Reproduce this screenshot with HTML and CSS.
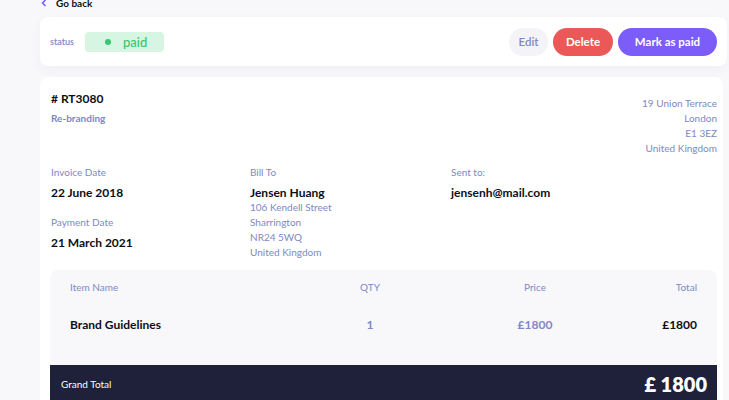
FILE: index.html
```html
<!DOCTYPE html>
<html lang="en">
<head>
<meta charset="utf-8">
<title>Invoice RT3080</title>
<link rel="stylesheet" href="styles.css">
</head>
<body>
<div class="page">
  <a class="back" href="#">
    <svg class="chev" width="6" height="8" viewBox="0 0 6 8"><path d="M4.5 1 L1.5 4 L4.5 7" fill="none" stroke="#7c5dfa" stroke-width="1.6"/></svg>
    <span>Go back</span>
  </a>

  <div class="status-card">
    <div class="status-left">
      <span class="status-label">status</span>
      <span class="badge"><span class="dot"></span>paid</span>
    </div>
    <div class="actions">
      <button class="btn btn-edit">Edit</button>
      <button class="btn btn-delete">Delete</button>
      <button class="btn btn-paid">Mark as paid</button>
    </div>
  </div>

  <div class="invoice-card">
    <div class="top">
      <div class="ident">
        <div class="inv-id"># RT3080</div>
        <div class="inv-desc">Re-branding</div>
      </div>
      <div class="sender">
        <div>19 Union Terrace</div>
        <div>London</div>
        <div>E1 3EZ</div>
        <div>United Kingdom</div>
      </div>
    </div>

    <div class="details">
      <div class="col">
        <div class="label">Invoice Date</div>
        <div class="value">22 June 2018</div>
        <div class="label label-gap">Payment Date</div>
        <div class="value">21 March 2021</div>
      </div>
      <div class="col">
        <div class="label">Bill To</div>
        <div class="value">Jensen Huang</div>
        <div class="addr">106 Kendell Street</div>
        <div class="addr">Sharrington</div>
        <div class="addr">NR24 5WQ</div>
        <div class="addr">United Kingdom</div>
      </div>
      <div class="col">
        <div class="label">Sent to:</div>
        <div class="value">jensenh@mail.com</div>
      </div>
    </div>

    <div class="items">
      <div class="row head">
        <div>Item Name</div>
        <div class="c">QTY</div>
        <div class="c">Price</div>
        <div class="r">Total</div>
      </div>
      <div class="row item">
        <div class="name">Brand Guidelines</div>
        <div class="c muted">1</div>
        <div class="c muted">£1800</div>
        <div class="r">£1800</div>
      </div>
    </div>
    <div class="grand">
      <span class="grand-label">Grand Total</span>
      <span class="grand-amount">£ 1800</span>
    </div>
  </div>
</div>
</body>
</html>
```

FILE: styles.css
```css
* { box-sizing: border-box; }
html, body { margin: 0; padding: 0; }
body {
  background: #f8f8fb;
  font-family: "Lato", "Inter", sans-serif;
  color: #0c0e16;
  overflow: hidden;
}
.page {
  padding: 0 2px 0 40px;
}
.back {
  display: flex;
  align-items: center;
  gap: 9px;
  height: 10px;
  margin-top: -2px;
  padding-left: 1px;
  text-decoration: none;
  color: #0c0e16;
  font-size: 10px;
  font-weight: 700;
}
.chev { display: block; }
.status-card {
  margin-top: 9px;
  height: 49px;
  background: #fff;
  border-radius: 8px;
  box-shadow: 0 4px 10px rgba(72, 84, 159, 0.05);
  display: flex;
  align-items: center;
  justify-content: space-between;
  padding: 0 10px 0 10px;
}
.status-left {
  display: flex;
  align-items: center;
  gap: 11px;
}
.status-label {
  font-size: 9px;
  color: #7e88c3;
  font-weight: 600;
}
.badge {
  width: 79px;
  height: 20px;
  border-radius: 4px;
  background: #d6f5e2;
  color: #33c96c;
  font-size: 13px;
  font-weight: 500;
  display: flex;
  align-items: center;
  padding-left: 20px;
  gap: 12px;
}
.dot {
  width: 6px;
  height: 6px;
  border-radius: 50%;
  background: #33c96c;
}
.actions {
  display: flex;
  gap: 5px;
}
.btn {
  height: 28px;
  border: none;
  border-radius: 14px;
  font-family: inherit;
  font-size: 11.5px;
  font-weight: 700;
  padding: 0;
  cursor: pointer;
}
.btn-edit { width: 39px; background: #f3f3f8; color: #7e88c3; font-weight: 600; }
.btn-delete { width: 60px; background: #ec5757; color: #fff; }
.btn-paid { width: 99px; background: #7c5dfa; color: #fff; }

.invoice-card {
  margin-top: 11px;
  margin-right: 4px;
  background: #fff;
  border-radius: 8px 8px 0 0;
  padding: 14px 6px 0 10px;
}
.top {
  display: flex;
  justify-content: space-between;
}
.inv-id {
  font-size: 12px;
  font-weight: 700;
  line-height: 15px;
  padding-left: 1px;
}
.inv-desc {
  margin-top: 5px;
  font-size: 10px;
  font-weight: 700;
  line-height: 15px;
  color: #7e88c3;
  padding-left: 1px;
}
.sender {
  margin-top: 4.5px;
  text-align: right;
  font-size: 10px;
  line-height: 15px;
  color: #7e88c3;
}
.details {
  margin-top: 9px;
  display: grid;
  grid-template-columns: 199px 201px 1fr;
  padding-left: 1px;
}
.label {
  font-size: 10px;
  line-height: 15px;
  color: #7e88c3;
}
.label-gap { margin-top: 15px; }
.value {
  margin-top: 5px;
  font-size: 12px;
  font-weight: 700;
  line-height: 15px;
}
.addr {
  font-size: 10px;
  line-height: 15px;
  color: #7e88c3;
}
.items {
  margin-top: 10.5px;
  background: #f8f8fb;
  border-radius: 8px 8px 0 0;
  padding: 10px 20px 33px 20px;
}
.row {
  display: grid;
  grid-template-columns: 260px 80px 250px 1fr;
  line-height: 15px;
}
.c { text-align: center; }
.r { text-align: right; }
.head {
  font-size: 10px;
  color: #7e88c3;
}
.item {
  margin-top: 22px;
  font-size: 12px;
  font-weight: 700;
}
.muted { color: #7e88c3; }
.grand {
  background: #1e2139;
  color: #fff;
  height: 37px;
  display: flex;
  align-items: center;
  justify-content: space-between;
  padding: 0 10px 0 11px;
}
.grand-label { font-size: 10px; }
.grand-amount { font-size: 20px; font-weight: 800; }
```
